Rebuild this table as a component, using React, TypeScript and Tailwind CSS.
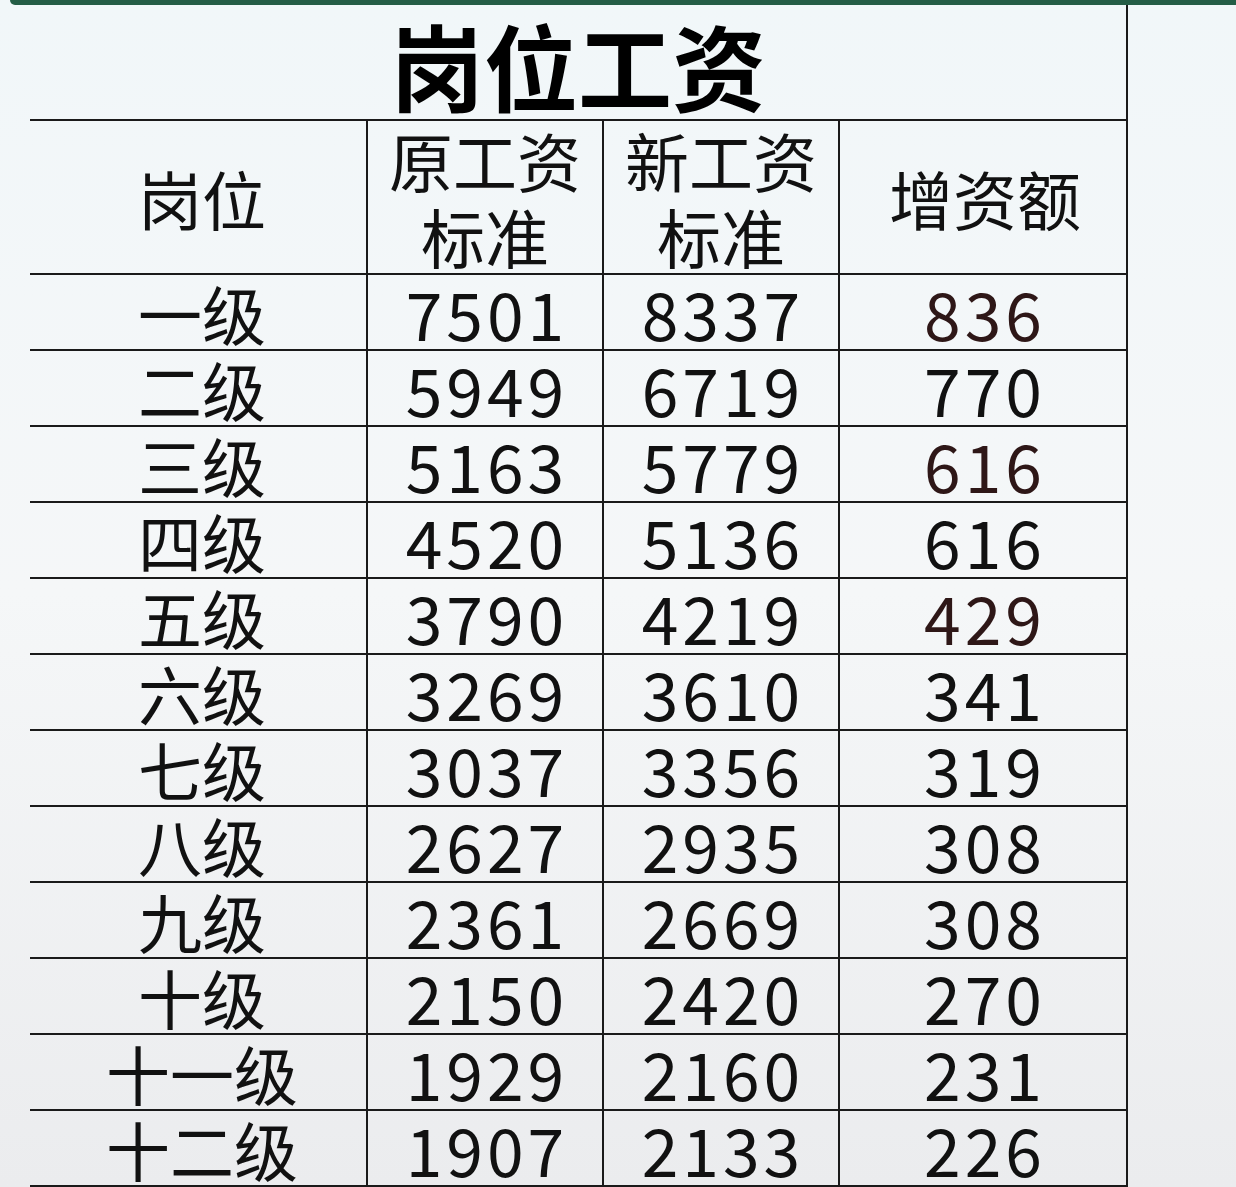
import React from 'react';

interface Row {
  level: string;
  oldPay: string;
  newPay: string;
  raise: string;
  tint?: boolean;
}

const rows: Row[] = [
  { level: '一级', oldPay: '7501', newPay: '8337', raise: '836', tint: true },
  { level: '二级', oldPay: '5949', newPay: '6719', raise: '770' },
  { level: '三级', oldPay: '5163', newPay: '5779', raise: '616', tint: true },
  { level: '四级', oldPay: '4520', newPay: '5136', raise: '616' },
  { level: '五级', oldPay: '3790', newPay: '4219', raise: '429', tint: true },
  { level: '六级', oldPay: '3269', newPay: '3610', raise: '341' },
  { level: '七级', oldPay: '3037', newPay: '3356', raise: '319' },
  { level: '八级', oldPay: '2627', newPay: '2935', raise: '308' },
  { level: '九级', oldPay: '2361', newPay: '2669', raise: '308' },
  { level: '十级', oldPay: '2150', newPay: '2420', raise: '270' },
  { level: '十一级', oldPay: '1929', newPay: '2160', raise: '231' },
  { level: '十二级', oldPay: '1907', newPay: '2133', raise: '226' },
];

const font = { fontFamily: '"Noto Sans CJK SC", "Noto Sans", sans-serif' };

const cell = 'border-r-2 border-b-2 border-[#1a1a1a] flex items-center justify-center';
const num = 'h-[76px] border-r-2 border-b-2 border-[#1a1a1a] flex items-center justify-center text-[66px] leading-[66px] tracking-[4px] pl-[4px]';

const App: React.FC = () => {
  return (
    <div
      className="w-[1236px] h-[1187px] overflow-hidden bg-gradient-to-b from-[#f1f7f9] via-[#f5f7f8] to-[#ebecee] text-[#111]"
      style={font}
    >
      <div className="ml-[10px] h-[5px] bg-[#245d46] rounded-bl-[8px]" />
      <div className="ml-[30px] w-[1098px]">
        <div className="h-[116px] border-r-2 border-b-2 border-[#1a1a1a] flex items-center justify-center">
          <span className="text-[94px] font-bold leading-none text-black mt-[4px]">岗位工资</span>
        </div>

        <div className="grid grid-cols-[338px_236px_236px_288px]">
          {/* header */}
          <div className={`h-[154px] ${cell} text-[64px] leading-none pl-[8px]`}>岗位</div>
          <div className={`h-[154px] ${cell} flex-col text-[64px] leading-[76px]`}>
            <span>原工资</span>
            <span>标准</span>
          </div>
          <div className={`h-[154px] ${cell} flex-col text-[64px] leading-[76px]`}>
            <span>新工资</span>
            <span>标准</span>
          </div>
          <div className={`h-[154px] ${cell} text-[64px] leading-none pl-[4px]`}>增资额</div>

          {rows.map((r, i) => (
            <React.Fragment key={i}>
              <div className={`h-[76px] ${cell} text-[64px] leading-none pl-[8px]`}>{r.level}</div>
              <div className={num}>{r.oldPay}</div>
              <div className={num}>{r.newPay}</div>
              <div className={r.tint ? `${num} text-[#2e1717]` : num}>{r.raise}</div>
            </React.Fragment>
          ))}
        </div>
      </div>
    </div>
  );
};

export default App;
